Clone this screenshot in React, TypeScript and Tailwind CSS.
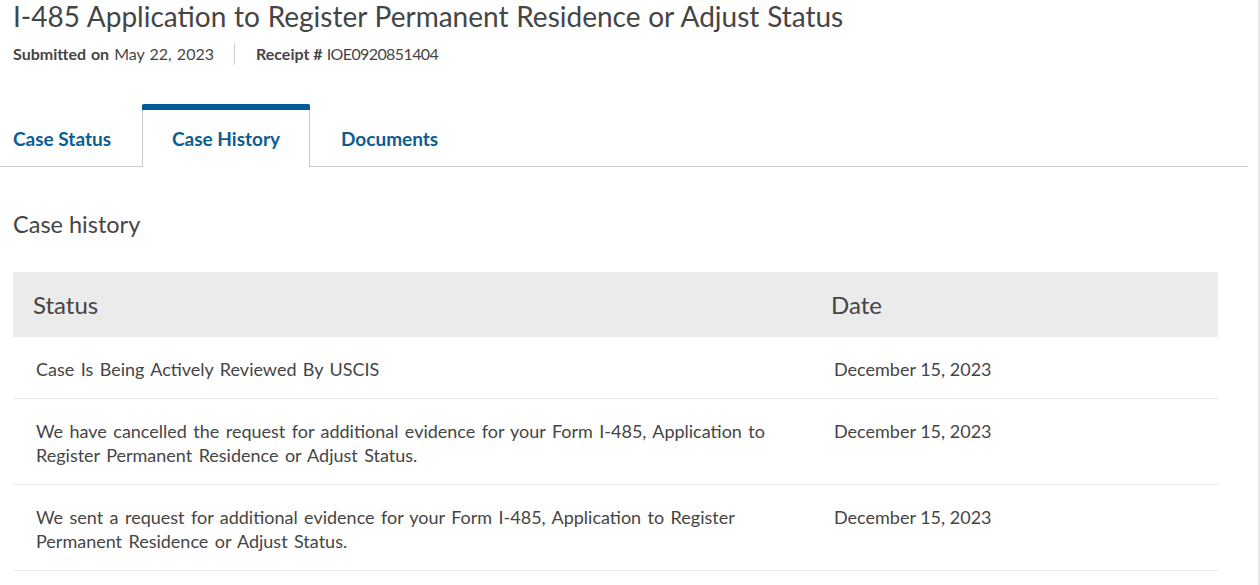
import React from "react";

const rows = [
  { status: "Case Is Being Actively Reviewed By USCIS", date: "December 15, 2023" },
  {
    status:
      "We have cancelled the request for additional evidence for your Form I-485, Application to Register Permanent Residence or Adjust Status.",
    date: "December 15, 2023",
  },
  {
    status:
      "We sent a request for additional evidence for your Form I-485, Application to Register Permanent Residence or Adjust Status.",
    date: "December 15, 2023",
  },
];

export default function App() {
  return (
    <div
      className="w-[1260px] h-[585px] overflow-hidden bg-white border-r-2 border-[#e6e6e6] text-[#454545]"
      style={{ fontFamily: "Lato, 'Noto Sans', sans-serif" }}
    >
      <div className="pl-[13px] pr-[12px]">
        <h1 className="text-[28px] leading-[32px] font-normal text-[#454545] [word-spacing:0.6px]">
          I-485 Application to Register Permanent Residence or Adjust Status
        </h1>
        <div className="flex items-center mt-[11px] text-[16px] leading-[22px]">
          <div className="pr-[20px] [word-spacing:1px]">
            <span className="font-bold">Submitted on</span>{" "}
            <span>May 22, 2023</span>
          </div>
          <div className="w-px h-[22px] bg-[#cfcfcf]" />
          <div className="pl-[21px]">
            <span className="font-bold">Receipt #</span>{" "}
            <span className="tracking-[-0.6px]">IOE0920851404</span>
          </div>
        </div>
      </div>

      <div className="mt-[39px] mr-[10px] flex items-end border-b border-[#c9c9c9] h-[63px]">
        <div className="pl-[13px] pr-[31px] h-[57px] flex items-center pt-[4px] text-[19px] font-bold text-[#0b5d93]">
          Case Status
        </div>
        <div className="relative w-[168px] h-[63px] bg-white border-x border-[#c9c9c9] -mb-px flex items-center justify-center pt-[7px] text-[19px] font-bold text-[#0b5d93]">
          <div className="absolute -left-px -right-px top-0 h-[6px] bg-[#005a9c] rounded-t-[2px]" />
          Case History
        </div>
        <div className="pl-[31px] h-[57px] flex items-center pt-[4px] text-[19px] font-bold text-[#0b5d93]">
          Documents
        </div>
      </div>

      <div className="pl-[13px] w-[1218px]">
        <h2 className="mt-[42px] text-[23.5px] leading-[30px] font-normal text-[#454545]">Case history</h2>
        <div className="mt-[33px]">
          <div className="flex bg-[#ebebeb] h-[65px] items-center pt-[1px] text-[24px] text-[#454545]">
            <div className="w-[798px] pl-[20px]">Status</div>
            <div className="pl-[20px]">Date</div>
          </div>
          {rows.map((r, i) => (
            <div
              key={i}
              className="flex border-b border-[#e6e6e6] pt-[20px] pb-[17px] text-[18px] leading-[24px] text-[#454545] ml-[1px] [word-spacing:1.8px]"
            >
              <div className="w-[797px] pl-[22px] pr-[40px]">{r.status}</div>
              <div className="pl-[23px] [word-spacing:0px]">{r.date}</div>
            </div>
          ))}
        </div>
      </div>
    </div>
  );
}
